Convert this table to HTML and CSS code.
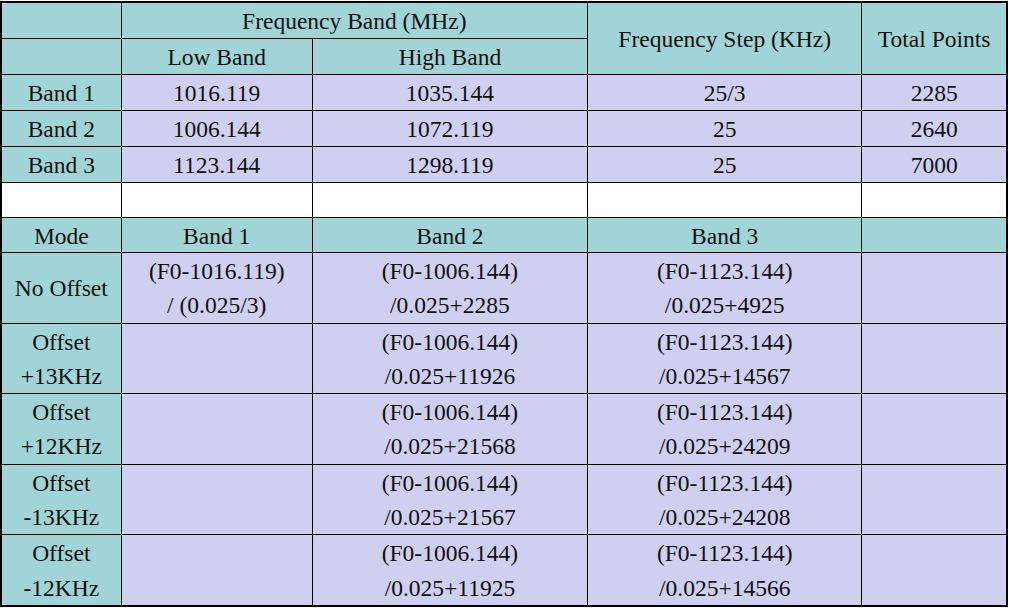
FILE: index.html
```html
<!DOCTYPE html>
<html>
<head>
<meta charset="utf-8">
<link rel="stylesheet" href="styles.css">
</head>
<body>
<table class="grid">
  <colgroup>
    <col class="c1"><col class="c2"><col class="c3"><col class="c4"><col class="c5">
  </colgroup>
  <tr class="r-h">
    <td class="teal"></td>
    <td class="teal" colspan="2">Frequency Band (MHz)</td>
    <td class="teal" rowspan="2">Frequency Step (KHz)</td>
    <td class="teal" rowspan="2">Total Points</td>
  </tr>
  <tr class="r-h">
    <td class="teal"></td>
    <td class="teal">Low Band</td>
    <td class="teal">High Band</td>
  </tr>
  <tr class="r-s">
    <td class="teal">Band 1</td><td>1016.119</td><td>1035.144</td><td>25/3</td><td>2285</td>
  </tr>
  <tr class="r-s">
    <td class="teal">Band 2</td><td>1006.144</td><td>1072.119</td><td>25</td><td>2640</td>
  </tr>
  <tr class="r-s">
    <td class="teal">Band 3</td><td>1123.144</td><td>1298.119</td><td>25</td><td>7000</td>
  </tr>
  <tr class="r-e">
    <td class="white"></td><td class="white"></td><td class="white"></td><td class="white"></td><td class="white"></td>
  </tr>
  <tr class="r-e">
    <td class="teal">Mode</td><td class="teal">Band 1</td><td class="teal">Band 2</td><td class="teal">Band 3</td><td class="teal"></td>
  </tr>
  <tr class="r-d">
    <td class="teal">No Offset</td>
    <td>(F0-1016.119)<br>/ (0.025/3)</td>
    <td>(F0-1006.144)<br>/0.025+2285</td>
    <td>(F0-1123.144)<br>/0.025+4925</td>
    <td></td>
  </tr>
  <tr class="r-d">
    <td class="teal">Offset<br>+13KHz</td>
    <td></td>
    <td>(F0-1006.144)<br>/0.025+11926</td>
    <td>(F0-1123.144)<br>/0.025+14567</td>
    <td></td>
  </tr>
  <tr class="r-d">
    <td class="teal">Offset<br>+12KHz</td>
    <td></td>
    <td>(F0-1006.144)<br>/0.025+21568</td>
    <td>(F0-1123.144)<br>/0.025+24209</td>
    <td></td>
  </tr>
  <tr class="r-d">
    <td class="teal">Offset<br>-13KHz</td>
    <td></td>
    <td>(F0-1006.144)<br>/0.025+21567</td>
    <td>(F0-1123.144)<br>/0.025+24208</td>
    <td></td>
  </tr>
  <tr class="r-d">
    <td class="teal">Offset<br>-12KHz</td>
    <td></td>
    <td>(F0-1006.144)<br>/0.025+11925</td>
    <td>(F0-1123.144)<br>/0.025+14566</td>
    <td></td>
  </tr>
</table>
</body>
</html>
```
FILE: styles.css
```css
html, body {
  margin: 0;
  padding: 0;
  background: #ffffff;
}
body {
  padding-top: 1px;
}
.grid {
  border-collapse: collapse;
  table-layout: fixed;
  width: 1008px;
  border: 2px solid #000;
  font-family: "Liberation Serif", "Times New Roman", serif;
  font-size: 23.5px;
  color: #111;
}
.c1 { width: 120px; }
.c2 { width: 191px; }
.c3 { width: 275px; }
.c4 { width: 274px; }
.c5 { width: 145px; }
.grid td {
  border: 1px solid #000;
  padding: 2px 0 0 0;
  text-align: center;
  vertical-align: middle;
  background: #cfcff0;
  overflow: hidden;
}
.grid td.teal { background: #a0d4d6; }
.grid td.white { background: #ffffff; }
.r-h td, .r-s td { height: 33px; line-height: 33px; }
.r-e td { height: 32px; line-height: 32px; }
.r-d td { height: 68.6px; line-height: 34.3px; padding-top: 1px; }
```
